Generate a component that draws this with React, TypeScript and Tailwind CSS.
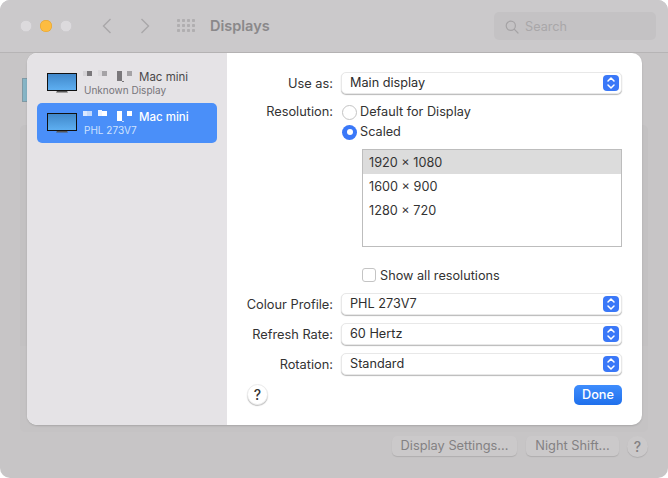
const F = "[font-family:Inter,'Liberation_Sans',sans-serif]";

function Mosaic({ light }: { light: boolean }) {
  const c = light
    ? ["#dbe8fe", "#c3d9fc", "#eef4ff", "#ffffff", "#d6e5fd"]
    : ["#d6d4d7", "#7a787b", "#dcdadd", "#a5a3a6", "#858386"];
  return (
    <svg width="52" height="13" viewBox="0 0 52 13" className="shrink-0">
      <rect x="0" y="1" width="4" height="5" fill={c[0]} />
      <rect x="4" y="1" width="5" height="5" fill={c[1]} />
      <rect x="15" y="0" width="4" height="6" fill={c[2]} />
      <rect x="19" y="1" width="5" height="5" fill={c[3]} />
      <rect x="34" y="1" width="5" height="10" fill={light ? c[3] : c[1]} />
      <rect x="39" y="11" width="2" height="1" fill={c[1]} />
      <rect x="44" y="1" width="5" height="5" fill={c[3]} />
    </svg>
  );
}

function Monitor() {
  return (
    <svg width="32" height="22" viewBox="0 0 32 22" className="shrink-0">
      <defs>
        <linearGradient id="scr" x1="0" y1="0" x2="0" y2="1">
          <stop offset="0" stopColor="#3f86c9" />
          <stop offset="1" stopColor="#5fb0f2" />
        </linearGradient>
      </defs>
      <rect x="1.5" y="1.5" width="29" height="17" fill="url(#scr)" stroke="#111" strokeWidth="1" />
      <path d="M11 19h10l1 1.6H10z" fill="#555" />
    </svg>
  );
}

function DisplayRow({ sub, active }: { sub: string; active?: boolean }) {
  return (
    <div className={`flex h-10 items-center gap-[5px] rounded-[5px] pl-[9px] ${active ? "bg-[#4a8ff9]" : ""}`}>
      <Monitor />
      <div className="flex flex-col">
        <div className="flex h-[14px] items-center gap-[4px]">
          <Mosaic light={!!active} />
          <span className={`text-[11.5px] leading-[14px] ${active ? "font-medium text-white" : "text-[#4a494b]"}`}>Mac mini</span>
        </div>
        <span className={`pl-[1px] text-[10px] leading-[13px] ${active ? "text-[#cfe2fd]" : "text-[#77757a]"}`}>{sub}</span>
      </div>
    </div>
  );
}

function Select({ value }: { value: string }) {
  return (
    <div className="flex h-[22px] items-center justify-between rounded-[5px] border border-[#e8e8e8] bg-white pl-[8px] pr-[2px] text-[#2e2e2e] shadow-[0_1px_1px_rgba(0,0,0,0.28)]">
      <span className="text-[12.7px] leading-none">{value}</span>
      <span className="flex h-4 w-4 items-center justify-center rounded-[4px] bg-[#3a78f8]">
        <svg width="10" height="14" viewBox="0 0 10 14" fill="none" stroke="#fff" strokeWidth="1.5" strokeLinecap="round" strokeLinejoin="round">
          <path d="M2 5l3-3 3 3" />
          <path d="M2 9l3 3 3-3" />
        </svg>
      </span>
    </div>
  );
}

function Row({ label, children }: { label: string; children: React.ReactNode }) {
  return (
    <div className="grid h-[22px] grid-cols-[106px_1fr] items-center gap-x-[8px]">
      <span className="pt-px text-right text-[12.8px] leading-[21px] text-[#333]">{label}</span>
      {children}
    </div>
  );
}

function Radio({ label, on }: { label: string; on?: boolean }) {
  return (
    <div className="flex h-5 items-center gap-[3px] pl-[1px]">
      {on ? (
        <span className="flex h-[15px] w-[15px] items-center justify-center rounded-full bg-[#3a78f8]">
          <span className="h-[6px] w-[6px] rounded-full bg-white" />
        </span>
      ) : (
        <span className="h-[15px] w-[15px] rounded-full border border-[#c4c4c4] bg-white" />
      )}
      <span className="text-[12.7px] text-[#333]">{label}</span>
    </div>
  );
}

function Help({ dim }: { dim?: boolean }) {
  return (
    <span
      className={`flex h-[21px] w-[21px] items-center justify-center rounded-full text-[14px] font-medium ${
        dim
          ? "bg-[#cbc9ca] text-[#838183] shadow-[0_1px_1px_rgba(0,0,0,0.12)]"
          : "border border-[#ececec] bg-white text-[#333] shadow-[0_1px_1px_rgba(0,0,0,0.25)]"
      }`}
    >
      ?
    </span>
  );
}

function DimButton({ label, w }: { label: string; w: string }) {
  return (
    <span className={`flex h-5 ${w} items-center justify-center rounded-[5px] bg-[#cbc9ca] text-[12.8px] text-[#838183] shadow-[0_1px_1px_rgba(0,0,0,0.12)]`}>
      {label}
    </span>
  );
}

export default function App() {
  const resolutions = ["1920 × 1080", "1600 × 900", "1280 × 720"];
  return (
    <div className={`h-[478px] w-[668px] overflow-hidden bg-white ${F}`}>
      <div className="relative flex h-full flex-col overflow-hidden rounded-[10px] bg-[#c7c5c6]">
        <header className="flex h-[53px] shrink-0 items-center border-b border-[#b6b4b5] bg-[#cbc9cb] pl-5 pr-3">
          <div className="flex items-center gap-2">
            <span className="h-3 w-3 rounded-full bg-[#dcdadd] shadow-[inset_0_0_0_0.5px_#c4c2c5]" />
            <span className="h-3 w-3 rounded-full bg-[#fdbc40] shadow-[inset_0_0_0_0.5px_#e0a030]" />
            <span className="h-3 w-3 rounded-full bg-[#dcdadd] shadow-[inset_0_0_0_0.5px_#c4c2c5]" />
          </div>
          <svg width="10" height="16" viewBox="0 0 10 16" fill="none" stroke="#a9a7a9" strokeWidth="1.4" className="ml-[30px]">
            <path d="M8.5 1L1.5 8l7 7" />
          </svg>
          <svg width="10" height="16" viewBox="0 0 10 16" fill="none" stroke="#a9a7a9" strokeWidth="1.4" className="ml-[28px]">
            <path d="M1.5 1l7 7-7 7" />
          </svg>
          <svg width="18" height="14" viewBox="0 0 18 14" fill="#b0aeb0" className="ml-[27px]">
            {[0, 5, 10].map((y) =>
              [0, 5, 10, 15].map((x) => <rect key={`${x}-${y}`} x={x} y={y} width="3" height="3" rx="0.8" />),
            )}
          </svg>
          <h1 className="ml-[15px] text-[14.5px] font-semibold text-[#8a888a]">Displays</h1>
          <div className="ml-auto flex h-7 w-[162px] items-center gap-[6px] rounded-[5px] bg-[#c4c2c4] pl-[11px]">
            <svg width="14" height="14" viewBox="0 0 14 14" fill="none" stroke="#a5a3a5" strokeWidth="1.2" strokeLinecap="round" className="mt-px">
              <circle cx="5.8" cy="5.8" r="4.6" />
              <path d="M9.2 9.2l3.8 3.8" />
            </svg>
            <span className="pt-[2px] text-[12.7px] text-[#a9a7a9]">Search</span>
          </div>
        </header>

        <div className="relative flex-1 px-5 pt-[72px]">
          <div className="h-[221px] rounded-t-[5px] bg-[#c3c1c2]" />
          <div className="h-[86px] rounded-b-[5px] bg-[#c5c3c4]" />
          <div className="absolute left-[22px] top-[25px] h-[24px] w-[8px] border border-[#7f9aa5] bg-[#86b5c6]" />
        </div>

        <footer className="flex h-[46px] shrink-0 items-start justify-end gap-[8px] pr-5 pt-1">
          <DimButton label="Display Settings..." w="mr-px w-[125px]" />
          <DimButton label="Night Shift..." w="w-[93px]" />
          <Help dim />
        </footer>

        <div className="absolute left-[27px] top-[53px] flex h-[372px] w-[615px] overflow-hidden rounded-[10px] bg-white shadow-[0_1px_2px_rgba(0,0,0,0.15)]">
          <aside className="flex w-[200px] shrink-0 flex-col bg-[#e5e3e6] px-[10px] pt-[10px]">
            <DisplayRow sub="Unknown Display" />
            <DisplayRow sub="PHL 273V7" active />
          </aside>
          <main className="flex flex-1 flex-col pr-[20px] pt-[19px]">
            <Row label="Use as:">
              <Select value="Main display" />
            </Row>
            <div className="mt-2 grid grid-cols-[106px_1fr] gap-x-[8px]">
              <span className="text-right text-[12.8px] leading-5 text-[#333]">Resolution:</span>
              <div className="flex flex-col">
                <Radio label="Default for Display" />
                <Radio label="Scaled" on />
              </div>
            </div>
            <div className="ml-[135px] mt-[7px] h-[98px] border border-[#bdbdbd] bg-white">
              {resolutions.map((r, i) => (
                <div key={r} className={`flex h-6 items-center pl-[6px] pt-px text-[12.7px] text-[#333] ${i === 0 ? "bg-[#dcdcdc]" : ""}`}>
                  {r}
                </div>
              ))}
            </div>
            <div className="ml-[135px] mt-[18px] flex h-5 items-center gap-[4px]">
              <span className="h-[14px] w-[14px] rounded-[3px] border border-[#c4c4c4] bg-white" />
              <span className="pt-px text-[12.7px] text-[#333]">Show all resolutions</span>
            </div>
            <div className="mt-2 flex flex-col gap-2">
              <Row label="Colour Profile:">
                <Select value="PHL 273V7" />
              </Row>
              <Row label="Refresh Rate:">
                <Select value="60 Hertz" />
              </Row>
              <Row label="Rotation:">
                <Select value="Standard" />
              </Row>
            </div>
            <div className="mt-[9px] flex items-center justify-between pl-[20px]">
              <Help />
              <span className="flex h-5 w-[48px] items-center justify-center rounded-[5px] bg-gradient-to-b from-[#3f8dfd] to-[#1f70ec] text-[12.7px] font-medium text-white">
                Done
              </span>
            </div>
          </main>
        </div>
      </div>
    </div>
  );
}
